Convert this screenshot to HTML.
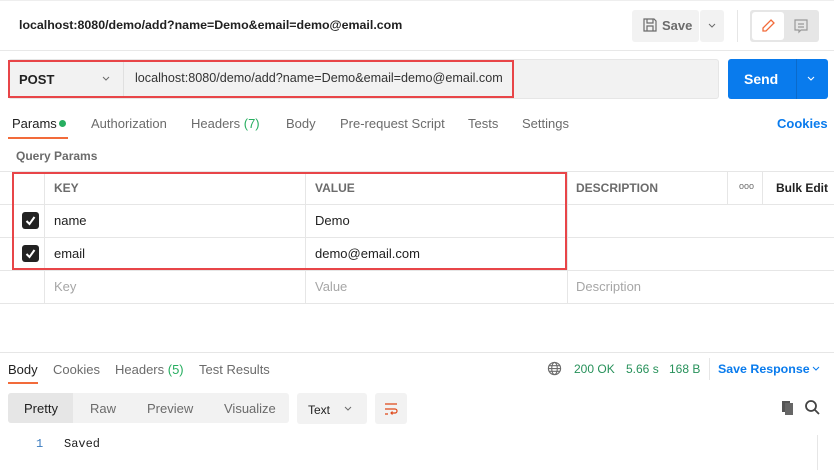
<!DOCTYPE html>
<html><head><meta charset="utf-8"><style>
*{box-sizing:border-box;margin:0;padding:0}
body{width:834px;height:470px;overflow:hidden;background:#fff;font-family:"Liberation Sans",sans-serif;font-size:13px;color:#212121;position:relative}
.a{position:absolute}
.t{position:absolute;white-space:nowrap}
.g{color:#6b6b6b}
.hl{position:absolute;height:1px;background:#e6e6e6}
.vl{position:absolute;width:1px;background:#e6e6e6}
</style></head><body>
<div class="hl" style="top:0;left:0;width:834px;background:#eee"></div>
<div class="t" style="left:19px;top:18px;font-size:12.4px;font-weight:bold;color:#212121">localhost:8080/demo/add?name=Demo&amp;email=demo@email.com</div>
<div class="a" style="left:632px;top:10px;width:67px;height:32px;background:#f2f2f2;border-radius:3px"></div>
<svg class="a" style="left:642px;top:17px" width="16" height="16" viewBox="0 0 16 16" fill="none" stroke="#6b6b6b" stroke-width="1.2"><path d="M2 2h10l2 2v10H2z M5 2v4h6V2 M5 14v-5h6v5"/></svg>
<div class="t g" style="left:662px;top:18px;font-weight:bold">Save</div>
<div class="a" style="left:700px;top:10px;width:24px;height:32px;background:#f2f2f2;border-radius:3px"></div>
<svg class="a" style="left:707px;top:22px" width="10" height="8" viewBox="0 0 10 8" fill="none" stroke="#6b6b6b" stroke-width="1"><path d="M2 2l3 3 3-3"/></svg>
<div class="vl" style="left:737px;top:10px;height:32px"></div>
<div class="a" style="left:750px;top:10px;width:69px;height:32px;background:#e6e6e6;border-radius:3px"></div>
<div class="a" style="left:752px;top:12px;width:32px;height:28px;background:#fff;border-radius:3px"></div>
<svg class="a" style="left:760px;top:18px" width="16" height="16" viewBox="0 0 16 16" fill="none" stroke="#f26b3a" stroke-width="1.3"><path d="M11 2l3 3-8 8H3v-3z"/></svg>
<svg class="a" style="left:793px;top:18px" width="16" height="16" viewBox="0 0 16 16" fill="none" stroke="#999" stroke-width="1.2"><path d="M2 2h12v10H8l-2 2v-2H2z M5 6h6 M5 9h6"/></svg>
<div class="hl" style="top:50px;left:0;width:834px;background:#e8e8e8"></div>

<div class="a" style="left:8px;top:59px;width:711px;height:40px;background:#f2f2f2;border:1px solid #e6e6e6;border-radius:3px"></div>
<div class="vl" style="left:123px;top:60px;height:38px;background:#e0e0e0"></div>
<div class="t" style="left:19px;top:72px;font-weight:bold;font-size:13px">POST</div>
<svg class="a" style="left:101px;top:75px" width="10" height="8" viewBox="0 0 10 8" fill="none" stroke="#6b6b6b" stroke-width="1"><path d="M2 2l3 3 3-3"/></svg>
<div class="t" style="left:135px;top:71px;font-size:12.6px;color:#333">localhost:8080/demo/add?name=Demo&amp;email=demo@email.com</div>
<div class="a" style="left:8px;top:60px;width:506px;height:38px;border:2px solid #e84548"></div>
<div class="a" style="left:728px;top:59px;width:100px;height:40px;background:#097bed;border-radius:3px"></div>
<div class="a" style="left:796px;top:59px;width:1px;height:40px;background:#0a6acb"></div>
<div class="t" style="left:744px;top:71px;color:#fff;font-weight:bold;font-size:14px">Send</div>
<svg class="a" style="left:806px;top:75px" width="10" height="8" viewBox="0 0 10 8" fill="none" stroke="#fff" stroke-width="1.1"><path d="M2 2l3 3 3-3"/></svg>

<div class="t" style="left:12px;top:116px">Params</div>
<div class="a" style="left:59px;top:120px;width:7px;height:7px;border-radius:50%;background:#27ae60"></div>
<div class="a" style="left:8px;top:137px;width:60px;height:2px;background:#f26b3a"></div>
<div class="t g" style="left:91px;top:116px">Authorization</div>
<div class="t g" style="left:191px;top:116px">Headers <span style="color:#27ae60">(7)</span></div>
<div class="t g" style="left:286px;top:116px">Body</div>
<div class="t g" style="left:340px;top:116px">Pre-request Script</div>
<div class="t g" style="left:468px;top:116px">Tests</div>
<div class="t g" style="left:522px;top:116px">Settings</div>
<div class="t" style="left:777px;top:116px;color:#097bed;font-weight:bold">Cookies</div>

<div class="t g" style="left:16px;top:149px;font-size:12px;font-weight:bold">Query Params</div>
<div class="hl" style="top:171px;left:0;width:834px"></div>
<div class="hl" style="top:204px;left:0;width:834px"></div>
<div class="hl" style="top:237px;left:0;width:834px"></div>
<div class="hl" style="top:270px;left:0;width:834px"></div>
<div class="hl" style="top:303px;left:0;width:834px"></div>
<div class="vl" style="left:44px;top:171px;height:132px"></div>
<div class="vl" style="left:305px;top:171px;height:132px"></div>
<div class="vl" style="left:567px;top:171px;height:132px"></div>
<div class="vl" style="left:727px;top:171px;height:33px"></div>
<div class="vl" style="left:762px;top:171px;height:33px"></div>
<div class="t g" style="left:54px;top:181px;font-size:12px;font-weight:bold">KEY</div>
<div class="t g" style="left:315px;top:181px;font-size:12px;font-weight:bold">VALUE</div>
<div class="t g" style="left:576px;top:181px;font-size:12px;font-weight:bold">DESCRIPTION</div>
<div class="t g" style="left:739px;top:181px;font-size:9px">ooo</div>
<div class="t" style="left:776px;top:181px;font-size:12px;font-weight:bold">Bulk Edit</div>
<div class="a" style="left:22px;top:212px;width:17px;height:17px;background:#222;border-radius:3px"></div>
<svg class="a" style="left:22px;top:212px" width="17" height="17" viewBox="0 0 17 17" fill="none" stroke="#fff" stroke-width="2"><path d="M4.5 9l3 3 5-7"/></svg>
<div class="a" style="left:22px;top:245px;width:17px;height:17px;background:#222;border-radius:3px"></div>
<svg class="a" style="left:22px;top:245px" width="17" height="17" viewBox="0 0 17 17" fill="none" stroke="#fff" stroke-width="2"><path d="M4.5 9l3 3 5-7"/></svg>
<div class="t" style="left:54px;top:213px">name</div>
<div class="t" style="left:315px;top:213px">Demo</div>
<div class="t" style="left:54px;top:246px">email</div>
<div class="t" style="left:315px;top:246px">demo@email.com</div>
<div class="t" style="left:54px;top:279px;color:#a6a6a6">Key</div>
<div class="t" style="left:315px;top:279px;color:#a6a6a6">Value</div>
<div class="t" style="left:576px;top:279px;color:#a6a6a6">Description</div>
<div class="a" style="left:12px;top:172px;width:555px;height:98px;border:2px solid #e84548"></div>

<div class="hl" style="top:352px;left:0;width:834px"></div>
<div class="t" style="left:8px;top:362px">Body</div>
<div class="a" style="left:8px;top:382px;width:30px;height:2px;background:#f26b3a"></div>
<div class="t g" style="left:53px;top:362px">Cookies</div>
<div class="t g" style="left:115px;top:362px">Headers <span style="color:#27ae60">(5)</span></div>
<div class="t g" style="left:199px;top:362px">Test Results</div>
<svg class="a" style="left:547px;top:361px" width="15" height="15" viewBox="0 0 16 16" fill="none" stroke="#6b6b6b" stroke-width="1.2"><circle cx="8" cy="8" r="6.5"/><ellipse cx="8" cy="8" rx="3" ry="6.5"/><path d="M1.5 8h13M2.5 5h11M2.5 11h11"/></svg>
<div class="t" style="left:574px;top:362px;font-size:12px;color:#27915a">200 OK</div>
<div class="t" style="left:626px;top:362px;font-size:12px;color:#27915a">5.66 s</div>
<div class="t" style="left:669px;top:362px;font-size:12px;color:#27915a">168 B</div>
<div class="vl" style="left:709px;top:358px;height:22px"></div>
<div class="t" style="left:718px;top:362px;color:#097bed;font-weight:bold;font-size:12.4px">Save Response</div>
<svg class="a" style="left:811px;top:365px" width="10" height="8" viewBox="0 0 10 8" fill="none" stroke="#097bed" stroke-width="1"><path d="M2 2l3 3 3-3"/></svg>

<div class="a" style="left:8px;top:393px;width:281px;height:30px;background:#f2f2f2;border-radius:3px"></div>
<div class="a" style="left:8px;top:393px;width:65px;height:30px;background:#e6e6e6;border-radius:3px 0 0 3px"></div>
<div class="t" style="left:24px;top:401px">Pretty</div>
<div class="t g" style="left:90px;top:401px">Raw</div>
<div class="t g" style="left:147px;top:401px">Preview</div>
<div class="t g" style="left:224px;top:401px">Visualize</div>
<div class="a" style="left:297px;top:393px;width:70px;height:31px;background:#f2f2f2;border-radius:3px"></div>
<div class="t" style="left:308px;top:403px;font-size:12px">Text</div>
<svg class="a" style="left:343px;top:405px" width="10" height="8" viewBox="0 0 10 8" fill="none" stroke="#6b6b6b" stroke-width="1"><path d="M2 2l3 3 3-3"/></svg>
<div class="a" style="left:375px;top:393px;width:32px;height:31px;background:#f2f2f2;border-radius:3px"></div>
<svg class="a" style="left:383px;top:401px" width="16" height="16" viewBox="0 0 16 16" fill="none" stroke="#e0491a" stroke-width="1.2"><path d="M2 3h12M2 8h10a2 2 0 010 4H8M9.5 10.5L8 12l1.5 1.5M2 13h3"/></svg>
<svg class="a" style="left:780px;top:399px" width="16" height="16" viewBox="0 0 16 16" fill="#555"><rect x="2" y="2" width="8" height="11"/><rect x="5" y="4" width="8" height="12" fill="#666"/></svg>
<svg class="a" style="left:804px;top:399px" width="16" height="16" viewBox="0 0 16 16" fill="none" stroke="#444" stroke-width="1.8"><circle cx="7" cy="7" r="5"/><path d="M11 11l4 4"/></svg>
<div class="t" style="left:36px;top:437px;font-family:'Liberation Mono',monospace;font-size:12px;color:#3a7bbf">1</div>
<div class="t" style="left:64px;top:437px;font-family:'Liberation Mono',monospace;font-size:12px">Saved</div>
<div class="vl" style="left:817px;top:435px;height:35px"></div>
</body></html>
